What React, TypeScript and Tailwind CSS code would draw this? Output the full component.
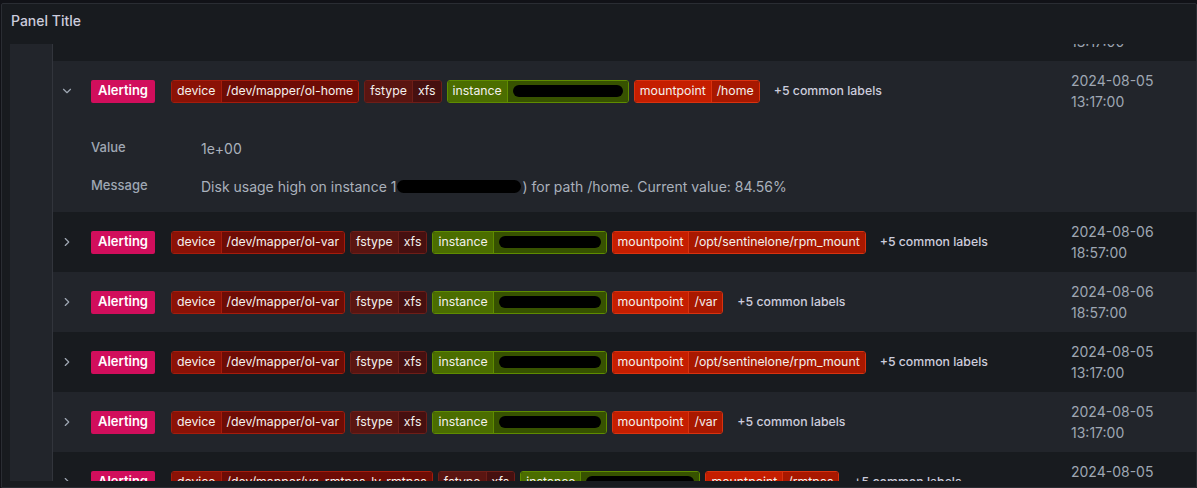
import { ChevronDown, ChevronRight } from "lucide-react";

type Tone = "device" | "fstype" | "instance" | "mountpoint";

const tones: Record<Tone, { box: string; key: string; val: string }> = {
  device: { box: "border-[#a51c0c]", key: "bg-[#8b1206]", val: "bg-[#6e0c05] border-[#a51c0c]" },
  fstype: { box: "border-[#6e1e18]", key: "bg-[#5a1511]", val: "bg-[#461010] border-[#6e1e18]" },
  instance: { box: "border-[#5f8c00]", key: "bg-[#4b6d00]", val: "bg-[#375200] border-[#5f8c00]" },
  mountpoint: { box: "border-[#d9320f]", key: "bg-[#c51e00]", val: "bg-[#a81800] border-[#d9320f]" },
};

function Label({ k, v, blob }: { k: Tone; v?: string; blob?: number }) {
  const t = tones[k];
  return (
    <span className={`flex h-[23px] shrink-0 items-stretch overflow-hidden rounded-[3px] border text-[12.3px] leading-none text-[#f4f1ee] ${t.box}`}>
      <span className={`flex items-center px-[5px] ${t.key}`}>{k}</span>
      <span className={`flex items-center border-l px-[5px] ${t.val}`}>
        {blob ? <span className="block h-[12px] rounded-full bg-black" style={{ width: blob }} /> : v}
      </span>
    </span>
  );
}

type Row = {
  device: string;
  instW: number;
  mount: string;
  date: string;
  time: string;
  open?: boolean;
};

const rows: Row[] = [
  { device: "/dev/mapper/ol-home", instW: 110, mount: "/home", date: "2024-08-05", time: "13:17:00" },
  { device: "/dev/mapper/ol-home", instW: 110, mount: "/home", date: "2024-08-05", time: "13:17:00", open: true },
  { device: "/dev/mapper/ol-var", instW: 102, mount: "/opt/sentinelone/rpm_mount", date: "2024-08-06", time: "18:57:00" },
  { device: "/dev/mapper/ol-var", instW: 102, mount: "/var", date: "2024-08-06", time: "18:57:00" },
  { device: "/dev/mapper/ol-var", instW: 102, mount: "/opt/sentinelone/rpm_mount", date: "2024-08-05", time: "13:17:00" },
  { device: "/dev/mapper/ol-var", instW: 102, mount: "/var", date: "2024-08-05", time: "13:17:00" },
  { device: "/dev/mapper/vg_rmtpas-lv_rmtpas", instW: 108, mount: "/rmtpas", date: "2024-08-05", time: "13:17:00" },
];

function AlertRow({ r, i }: { r: Row; i: number }) {
  const bg = i % 2 === 1 ? "bg-[#22252b]" : "bg-[#181b1f]";
  return (
    <div className={bg}>
      <div className="flex h-[60px] items-center pl-[6px]">
        <span className="flex w-[16px] justify-center text-[#9fa7b3]">
          {r.open ? <ChevronDown size={14} strokeWidth={2} /> : <ChevronRight size={14} strokeWidth={2} />}
        </span>
        <span className="ml-[16px] flex h-[23px] w-[64px] items-center justify-center rounded-[2px] bg-[#d10e5c] text-[13px] font-semibold text-white">
          Alerting
        </span>
        <div className="ml-[16px] flex flex-1 items-center gap-[5px] overflow-hidden">
          <Label k="device" v={r.device} />
          <Label k="fstype" v="xfs" />
          <Label k="instance" blob={r.instW} />
          <Label k="mountpoint" v={r.mount} />
          <span className="ml-[9px] shrink-0 text-[12.3px] font-medium text-[#ccccdc]">+5 common labels</span>
        </div>
        <div className="w-[125px] shrink-0 text-[14px] leading-[21px] text-[#9fa7b3]">
          <div>{r.date}</div>
          <div>{r.time}</div>
        </div>
      </div>
      {r.open && (
        <div className="pb-[5px] pl-[38px] pt-[10px]">
          <div className="flex h-[34px] items-center">
            <span className="w-[110px] text-[13px] font-medium text-[#9fa7b3]">Value</span>
            <span className="text-[14px] text-[#aab1bc]">1e+00</span>
          </div>
          <div className="flex h-[42px] items-center">
            <span className="w-[110px] text-[13px] font-medium text-[#9fa7b3]">Message</span>
            <span className="flex items-center text-[14px] text-[#aab1bc]">
              Disk usage high on instance 1
              <span className="mx-[1px] inline-block h-[13px] w-[124px] rounded-full bg-black" />
              ) for path /home. Current value: 84.56%
            </span>
          </div>
        </div>
      )}
    </div>
  );
}

export default function App() {
  return (
    <div className="h-[488px] w-[1197px] overflow-hidden bg-[#111217] pl-[1px] pt-[3px] font-['Inter',sans-serif]">
      <div className="flex h-[485px] flex-col rounded-t-[2px] border border-[#2a2d33] bg-[#181b1f] pb-[6px]">
        {/* panel header */}
        <div className="flex h-[40px] shrink-0 items-start pl-[9px] pt-[6px] text-[14px] font-medium text-[#ccccdc]">Panel Title</div>

        {/* scrolled alert list */}
        <div className="flex min-h-0 flex-1 pl-[8px]">
          <div className="w-[43px] shrink-0 border-r border-[#32353c] bg-[#22252b]" />
          <div className="min-w-0 flex-1 overflow-hidden">
            <div className="-mt-[43px]">
              {rows.map((r, i) => (
                <AlertRow key={i} r={r} i={i} />
              ))}
            </div>
          </div>
        </div>
      </div>
    </div>
  );
}
